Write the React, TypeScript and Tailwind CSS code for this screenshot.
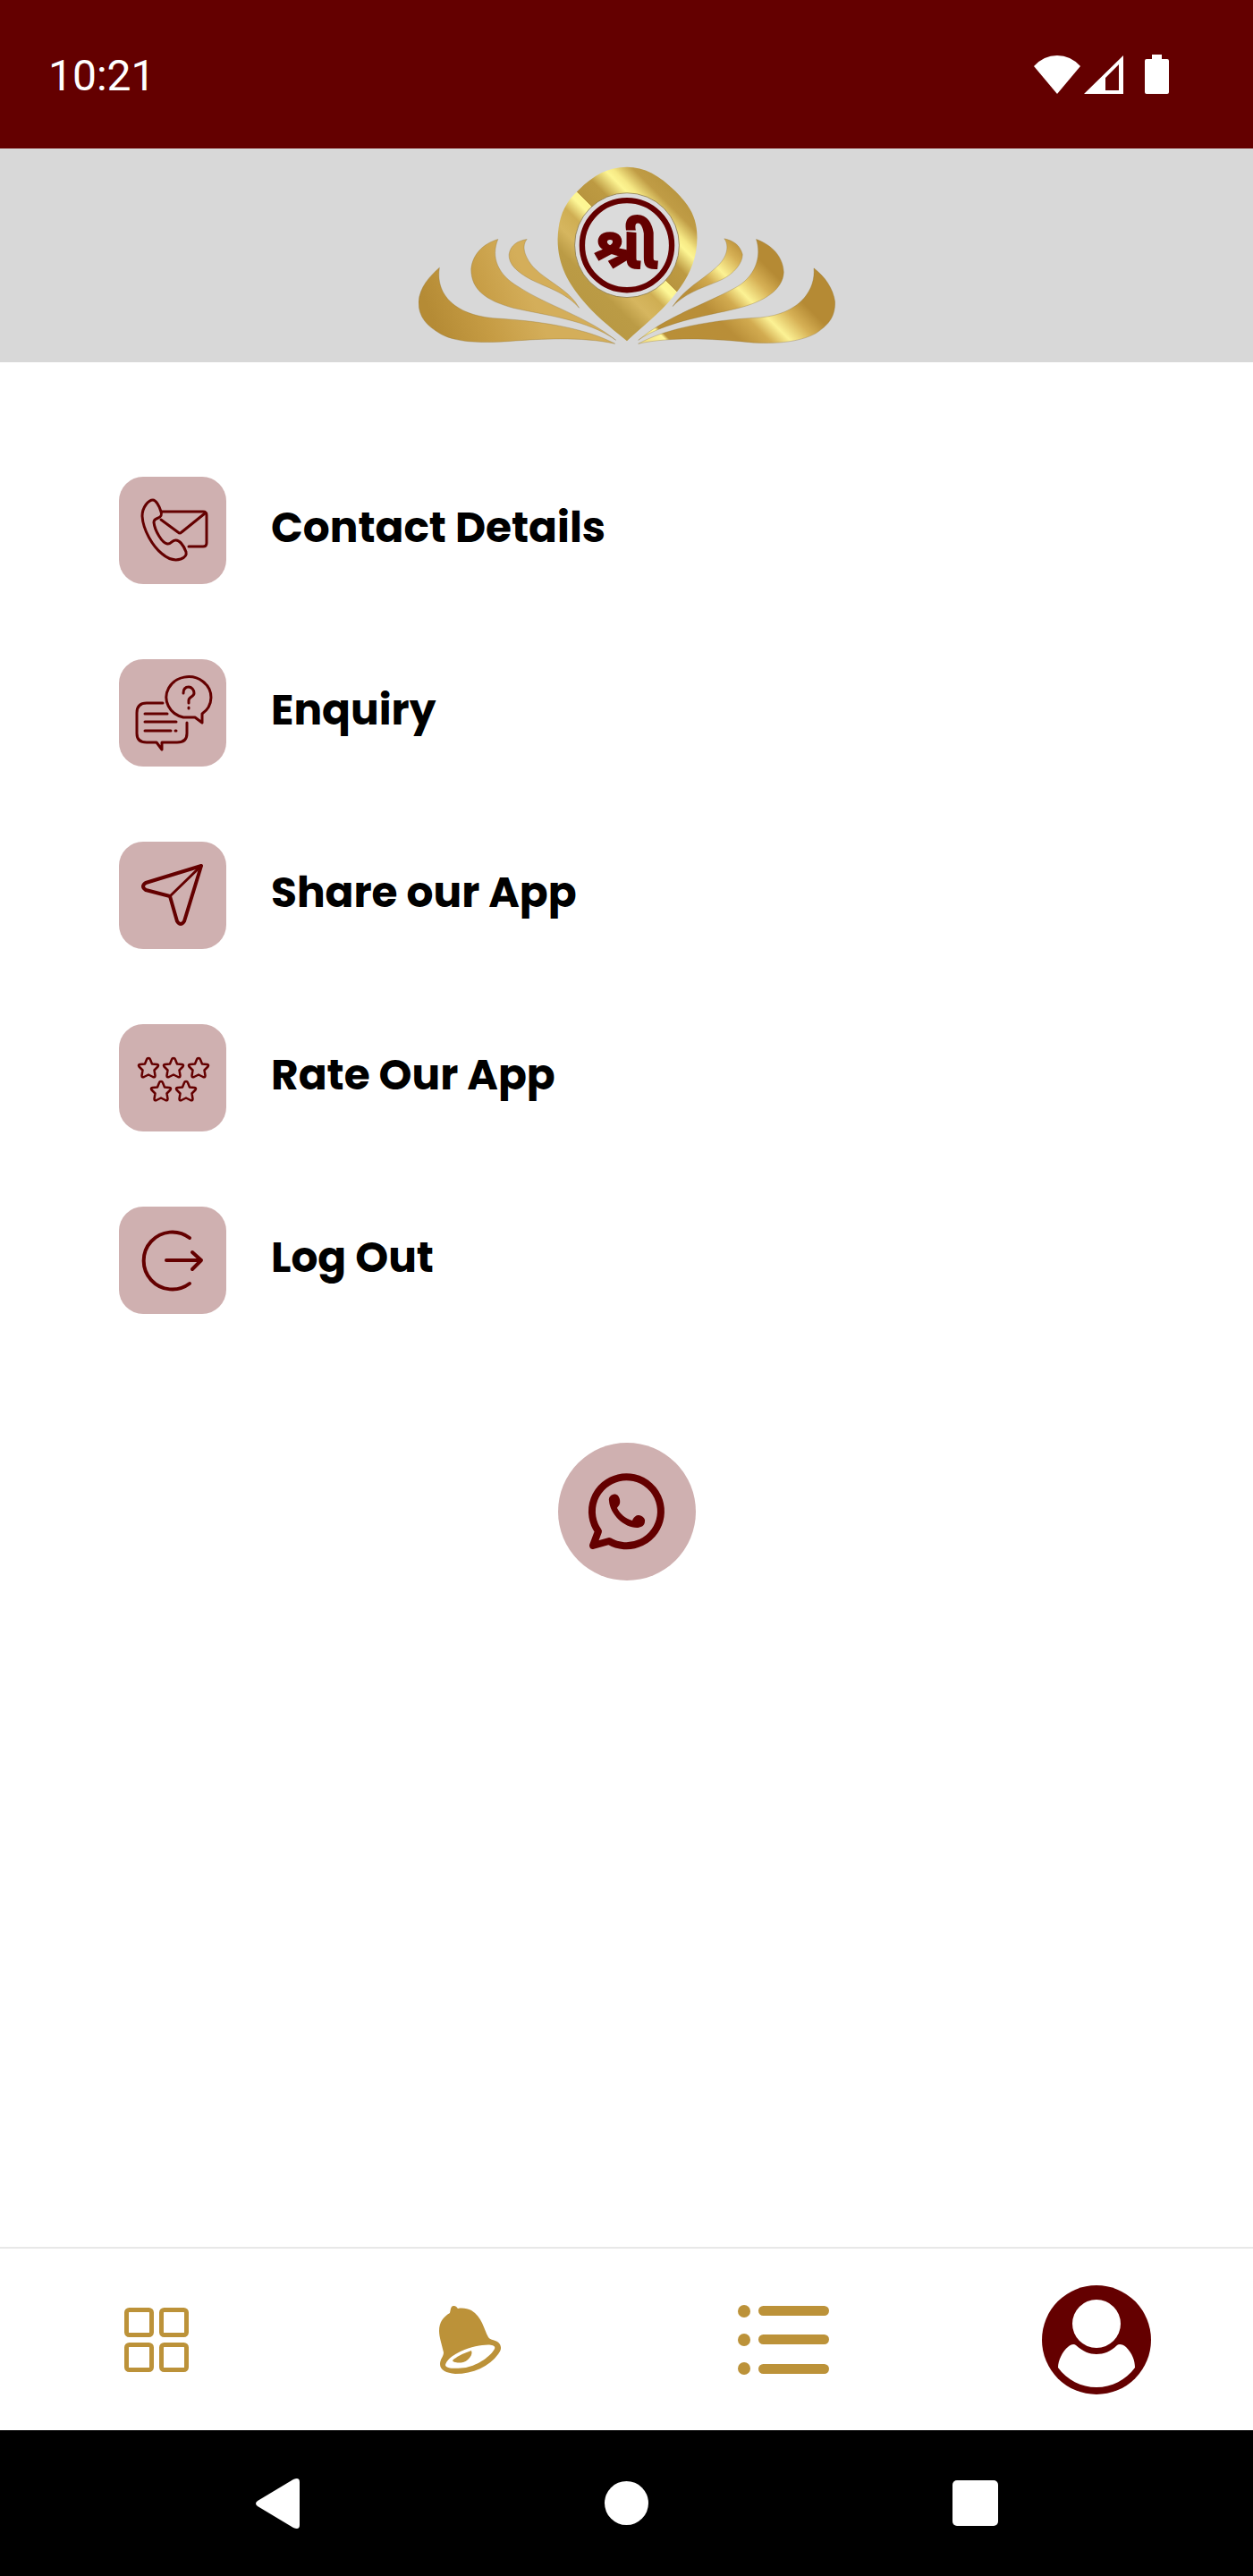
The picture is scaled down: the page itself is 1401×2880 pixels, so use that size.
import type { ReactNode } from "react";

function ShreeLogo() {
  return (
    <svg viewBox="54 46 1396 596" className="h-[199px] w-[466px]" role="img" aria-label="Shree">
      <defs>
        <linearGradient id="pin" gradientUnits="userSpaceOnUse" x1="0" y1="0" x2="500" y2="-500">
          <stop offset="0.1" stopColor="#b99944" />
          <stop offset="0.2" stopColor="#bb9b45" />
          <stop offset="0.28" stopColor="#d6b65f" />
          <stop offset="0.36" stopColor="#cfae53" />
          <stop offset="0.42" stopColor="#fdf796" />
          <stop offset="0.452" stopColor="#fdf590" />
          <stop offset="0.453" stopColor="#b8953f" />
          <stop offset="0.54" stopColor="#bd9a42" />
          <stop offset="0.62" stopColor="#fdf592" />
          <stop offset="0.65" stopColor="#f6e985" />
          <stop offset="0.72" stopColor="#c09c45" />
          <stop offset="0.8" stopColor="#b8953f" />
        </linearGradient>
        <linearGradient id="rightPetals" gradientUnits="userSpaceOnUse" x1="0" y1="0" x2="500" y2="-500">
          <stop offset="0.18" stopColor="#f3e086" />
          <stop offset="0.255" stopColor="#fff79a" />
          <stop offset="0.27" stopColor="#b98f38" />
          <stop offset="0.5" stopColor="#b98e38" />
          <stop offset="0.6" stopColor="#d2ab50" />
          <stop offset="0.67" stopColor="#fcf294" />
          <stop offset="0.76" stopColor="#d6b055" />
          <stop offset="0.84" stopColor="#b58a34" />
          <stop offset="0.95" stopColor="#b58a34" />
        </linearGradient>
        <linearGradient id="leftPetals" gradientUnits="userSpaceOnUse" x1="100" y1="560" x2="420" y2="440">
          <stop offset="0" stopColor="#b58b35" />
          <stop offset="0.5" stopColor="#c69c44" />
          <stop offset="1" stopColor="#d4ae5a" />
        </linearGradient>
      </defs>
      <g fill="url(#leftPetals)" stroke="#8f6f2a" strokeWidth="1">
        <path d="M124 385C110 470 170 550 330 556C470 565 620 590 712 640C600 615 450 625 380 630C260 640 180 635 130 608C80 580 54 550 54 500C58 450 90 415 124 385Z" />
        <path d="M320 290C295 350 320 410 390 450C480 510 620 550 715 628C620 560 480 545 370 520C280 495 230 460 230 390C235 340 270 305 320 290Z" />
        <path d="M417 290C400 310 405 345 440 385C490 435 560 460 592 520C550 470 480 450 430 425C385 400 355 375 357 340C362 310 385 295 417 290Z" />
      </g>
      <g fill="url(#rightPetals)" stroke="#8f6f2a" strokeWidth="1">
        <path d="M1078 288C1095 310 1090 350 1050 385C1000 430 945 455 905 515C950 465 1030 445 1070 425C1110 405 1140 370 1139 340C1130 310 1110 295 1078 288Z" />
        <path d="M1185 290C1205 350 1180 420 1110 455C1020 505 880 550 790 628C880 565 1030 545 1120 522C1210 500 1275 460 1277 400C1275 350 1240 310 1185 290Z" />
        <path d="M1378 387C1385 460 1330 540 1200 552C1030 560 880 590 790 640C900 615 1050 625 1130 632C1240 645 1330 635 1385 605C1430 575 1449 550 1449 500C1443 455 1415 415 1378 387Z" />
      </g>
      <path
        fill="url(#pin)"
        d="M752 631C690 580 640 540 600 490C560 440 520 380 520 290C522 220 540 170 590 125C640 75 690 48 752 48C810 48 860 75 915 130C965 180 987 220 987 285C987 370 950 430 905 485C860 540 800 585 752 631Z"
      />
      <circle cx="752" cy="310" r="175" fill="#dcdcdc" stroke="#7d6a34" strokeWidth="2" />
      <circle cx="752" cy="310" r="150" fill="#dbdbdb" stroke="#640000" strokeWidth="19" />
      <text
        x="749"
        y="388"
        textAnchor="middle"
        fill="#640000"
        stroke="#640000"
        strokeWidth="6"
        className="font-['Noto_Sans_Gujarati','Noto_Sans',sans-serif] text-[198px] font-bold"
      >
        શ્રી
      </text>
    </svg>
  );
}

function TileIcon({ children, width = 3 }: { children: ReactNode; width?: number }) {
  return (
    <svg
      viewBox="0 0 120 120"
      className="size-full"
      fill="none"
      stroke="#640000"
      strokeWidth={width}
      strokeLinecap="round"
      strokeLinejoin="round"
      aria-hidden="true"
    >
      {children}
    </svg>
  );
}

const STAR =
  "M0-11Q1.500-11 2-9.500L4-4.500L9.500-4Q12-3.500 10.500-1.500L6.500 2.500L7.500 8.500Q7.500 11 5 10L0 7.500L-5 10Q-7.500 11-7.500 8.500L-6.500 2.500L-10.500-1.500Q-12-3.500-9.500-4L-4-4.500L-2-9.500Q-1.500-11 0-11Z";

const STARS = [
  [33, 49],
  [61, 49],
  [89, 49],
  [47, 75],
  [75, 75],
];

const ITEMS: { label: string; icon: ReactNode }[] = [
  {
    label: "Contact Details",
    icon: (
      <TileIcon>
        <path d="M47 39C45 32 41 26 38 26C33 26 26 34 26 44C27 60 38 78 48 86C55 92 63 94 69 92C74 90 76 88 75 84C72 76 67 70 63 71C59 71 58 76 54 75C48 74 40 60 39 51C39 48 41 47 44 46C48 44 48 42 47 39Z" />
        <path d="M48 39H94Q98 39 98 43V74Q98 78 94 78H78" />
        <path d="M47 48L66 62Q68 64 70 62L96 41" />
      </TileIcon>
    ),
  },
  {
    label: "Enquiry",
    icon: (
      <TileIcon>
        <path d="M93 61A25 23 0 1 0 72 65H85L93 71Z" />
        <path d="M72 38C72 33 74 31 78 31C81 31 84 34 84 38C84 42 78 42 78 46V49M78 54V55" />
        <path d="M49 49H31Q20 49 20 60V83Q20 93 31 93H42L48 101V93H65Q76 93 76 83V71" />
        <path d="M29 61H54M29 70H64M29 80H58M63 80H64" />
      </TileIcon>
    ),
  },
  {
    label: "Share our App",
    icon: (
      <TileIcon>
        <path strokeWidth="4" d="M92 27L30 46Q24 50 30 54L57 61L65 89Q69 95 73 89Z" />
        <path d="M92 27L57 61" />
      </TileIcon>
    ),
  },
  {
    label: "Rate Our App",
    icon: (
      <TileIcon width={2.5}>
        {STARS.map(([x, y]) => (
          <path key={`${x}-${y}`} d={STAR} transform={`translate(${x} ${y})`} />
        ))}
      </TileIcon>
    ),
  },
  {
    label: "Log Out",
    icon: (
      <TileIcon width={4}>
        <path d="M79 35A32 32 0 1 0 79 86M53 60H92M82 51L92 60L82 70" />
      </TileIcon>
    ),
  },
];

function StatusBar() {
  return (
    <div className="flex h-[166px] items-center justify-between bg-[#640000] pr-[94px] pl-[54px] text-white">
      <span className="pt-1 font-[Roboto,sans-serif] text-[48px] leading-none">10:21</span>
      <div className="flex items-end">
        <svg viewBox="0 0 52 43" className="mr-1 h-[43px] w-[52px]" fill="currentColor" aria-label="Wi-Fi">
          <path d="M0 12Q11 0 26 0T52 12L26 43Z" />
        </svg>
        <svg viewBox="0 0 44 43" className="mr-6 h-[43px] w-[44px]" fill="currentColor" aria-label="Signal">
          <path fillRule="evenodd" d="M0 43L44 0V43ZM24 25V39H39V10Z" />
        </svg>
        <svg viewBox="0 0 27 44" className="h-[44px] w-[27px]" fill="currentColor" aria-label="Battery">
          <path d="M8 0H19V5H25Q27 5 27 7V42Q27 44 25 44H2Q0 44 0 42V7Q0 5 2 5H8Z" />
        </svg>
      </div>
    </div>
  );
}

function TabBar() {
  return (
    <nav aria-label="Main" className="border-t-2 border-[#e8e8e8] bg-white">
      <ul className="grid h-[203px] grid-cols-4">
        <li className="flex items-center justify-center">
          <button type="button" aria-label="Dashboard">
            <svg viewBox="0 0 72 72" className="size-[72px]" fill="none" stroke="#bc9239" strokeWidth="5">
              <rect x="2.500" y="2.500" width="28" height="28" rx="3" />
              <rect x="41.500" y="2.500" width="28" height="28" rx="3" />
              <rect x="2.500" y="41.500" width="28" height="28" rx="3" />
              <rect x="41.500" y="41.500" width="28" height="28" rx="3" />
            </svg>
          </button>
        </li>
        <li className="flex items-center justify-center">
          <button type="button" aria-label="Notifications">
            <svg viewBox="0 0 69 76" className="h-[76px] w-[69px]" fill="#bc9239">
              <path
                fillRule="evenodd"
                d="M12 8C13 4 13 0 16 0C19 0 20 2 21 3C26 2 32 3 36 5C48 12 50 26 55 35C57 39 64 37 68 43C70 47 69 50 66 54C56 68 38 76 18 76C8 75 1 72 1 65C1 59 5 57 5 52C3 43 0 35 0 28C0 18 5 12 12 8ZM7 66C7 71 22 70 30 69C44 66 58 56 62 48C64 43 55 43 48 44C34 45 10 55 7 66Z"
              />
              <path d="M15 61C20 56 28 53 36 50C38 55 33 61 27 63C23 64 16 64 15 61Z" />
            </svg>
          </button>
        </li>
        <li className="flex items-center justify-center">
          <button type="button" aria-label="List">
            <svg viewBox="0 0 102 78" className="h-[78px] w-[102px]" fill="#bc9239">
              <circle cx="7" cy="7" r="7" />
              <circle cx="7" cy="39" r="7" />
              <circle cx="7" cy="71" r="7" />
              <rect x="23" y="1" width="79" height="11" rx="5.500" />
              <rect x="23" y="33" width="79" height="11" rx="5.500" />
              <rect x="23" y="66" width="79" height="11" rx="5.500" />
            </svg>
          </button>
        </li>
        <li className="flex items-center justify-center">
          <button type="button" aria-label="Profile" aria-current="page">
            <svg viewBox="0 0 122 122" className="size-[122px]" fill="#fff">
              <circle cx="61" cy="61" r="61" fill="#640000" />
              <circle cx="61" cy="43" r="27" />
              <path d="M38 67C46 74 53 77 61 77C69 77 77 74 84 67C86 65 91 66 94 69C101 76 104 84 104 92C94 106 78 114 61 114C44 114 28 106 18 92C18 84 23 74 29 69C32 66 36 65 38 67Z" />
            </svg>
          </button>
        </li>
      </ul>
    </nav>
  );
}

function SystemBar() {
  return (
    <div className="grid h-[163px] grid-cols-3 items-center justify-items-center bg-black px-[115px]">
      <button type="button" aria-label="Back">
        <svg viewBox="0 0 49 56" className="h-[56px] w-[49px]" fill="#fff">
          <path d="M2 25L42 1Q49-2 49 4V52Q49 58 42 55L2 31Q-2 28 2 25Z" />
        </svg>
      </button>
      <button type="button" aria-label="Home" className="size-[49px] rounded-full bg-white" />
      <button type="button" aria-label="Recent apps" className="size-[51px] rounded-[5px] bg-white" />
    </div>
  );
}

export default function App() {
  return (
    <div className="flex min-h-screen flex-col bg-white">
      <StatusBar />
      <header className="flex h-[239px] items-center justify-center bg-[#d8d8d8]">
        <ShreeLogo />
      </header>
      <main className="flex grow flex-col px-[133px] pt-32">
        <ul className="flex flex-col gap-[84px]">
          {ITEMS.map(({ label, icon }) => (
            <li key={label}>
              <button type="button" className="flex items-center gap-[50px] text-left">
                <span className="size-[120px] shrink-0 overflow-hidden rounded-[27px] bg-[#cfb0b0]">{icon}</span>
                <span className="pb-2 font-[Poppins,Inter,sans-serif] text-[47px] font-bold leading-none text-black">
                  {label}
                </span>
              </button>
            </li>
          ))}
        </ul>
        <button
          type="button"
          aria-label="WhatsApp"
          className="mt-36 size-[154px] shrink-0 self-center rounded-full bg-[#cfb0b0]"
        >
          <svg viewBox="0 0 154 154" className="size-full" aria-hidden="true">
            <path
              d="M45 99A38.500 38.500 0 1 1 57 110L39 115Z"
              fill="none"
              stroke="#640000"
              strokeWidth="8"
              strokeLinejoin="round"
            />
            <path
              fill="#640000"
              d="M57 65C56 60 60 57.500 64 57.500C68 58 70 64 69 68C68 71 66 72 66 73C69 79 75 85 83 87C85 82 88 81 90 81C94 81 98 85 97 88C97 93 92 95 88 95C74 95 58 80 57 65Z"
            />
          </svg>
        </button>
      </main>
      <TabBar />
      <SystemBar />
    </div>
  );
}
